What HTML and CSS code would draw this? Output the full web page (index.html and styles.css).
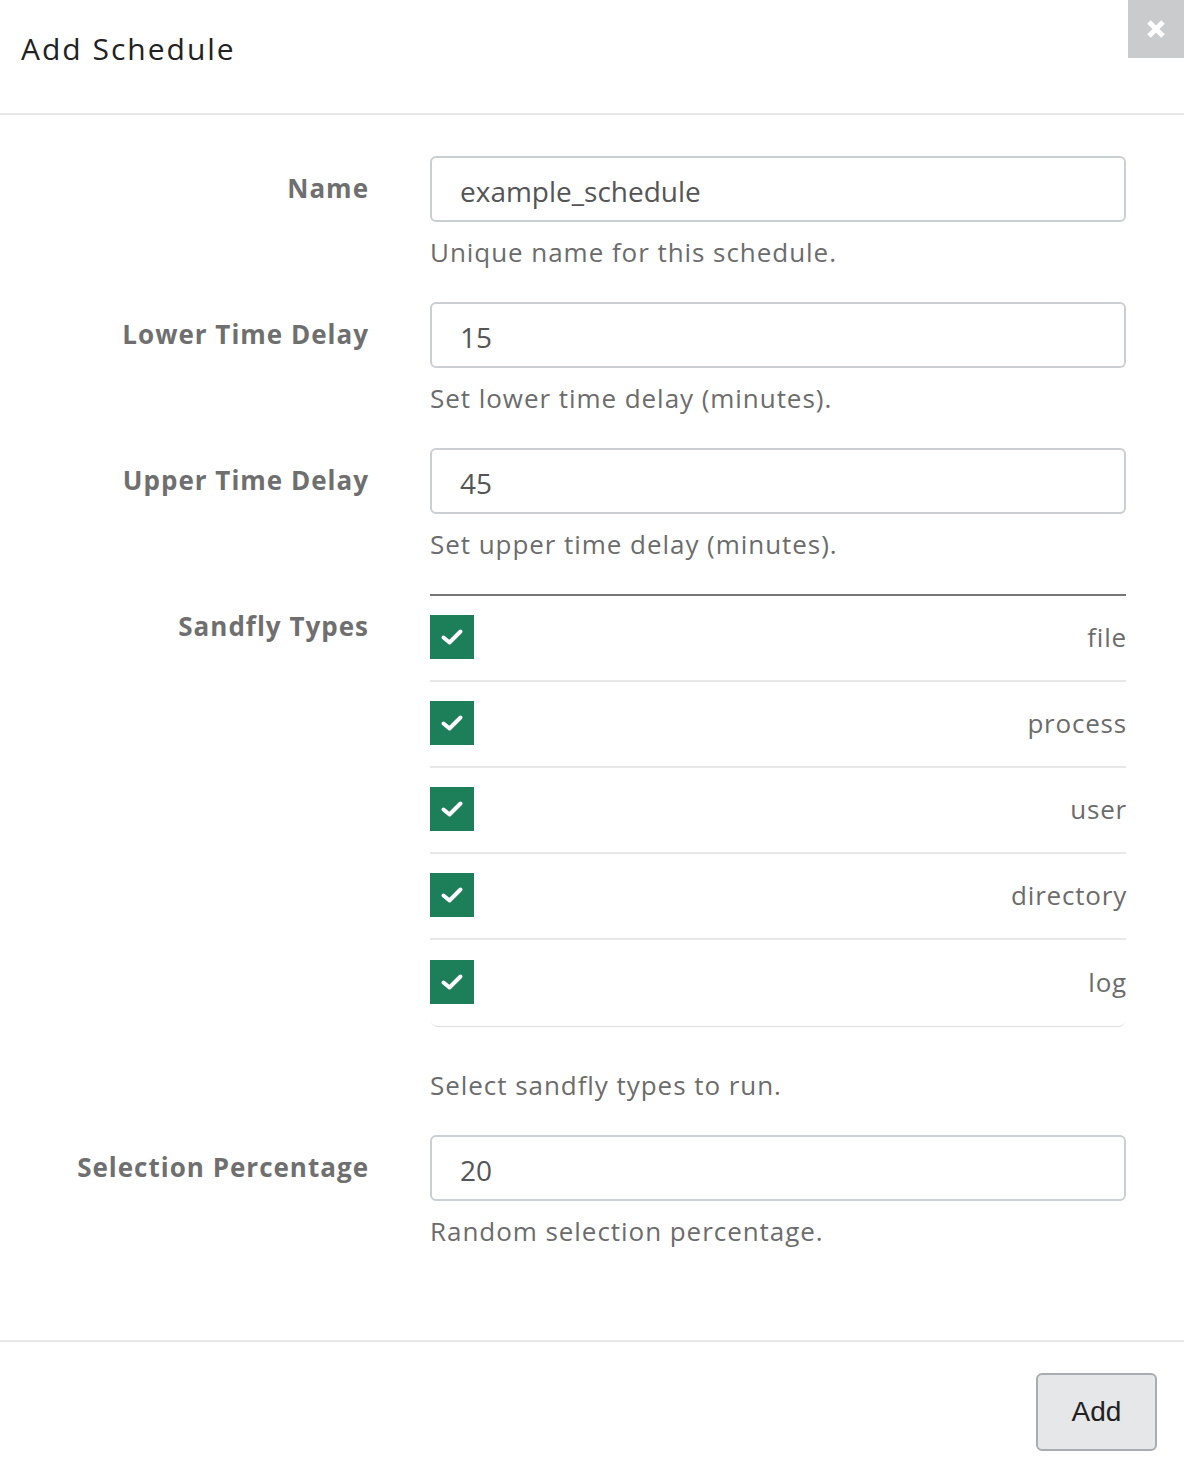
FILE: index.html
```html
<!DOCTYPE html>
<html lang="en">
<head>
<meta charset="utf-8">
<title>Add Schedule</title>
<link rel="stylesheet" href="styles.css">
</head>
<body>
<div class="modal">
  <div class="modal-header">
    <h4 class="modal-title">Add Schedule</h4>
    <button class="close" type="button" aria-label="Close">
      <svg width="20" height="20" viewBox="0 0 20 20"><path d="M3 3 L17 17 M17 3 L3 17" stroke="#fff" stroke-width="5" stroke-linecap="butt"/></svg>
    </button>
  </div>
  <div class="modal-body">
    <div class="form-group">
      <label class="control-label">Name</label>
      <div class="field">
        <div class="form-control">example_schedule</div>
        <p class="help">Unique name for this schedule.</p>
      </div>
    </div>
    <div class="form-group">
      <label class="control-label">Lower Time Delay</label>
      <div class="field">
        <div class="form-control">15</div>
        <p class="help">Set lower time delay (minutes).</p>
      </div>
    </div>
    <div class="form-group">
      <label class="control-label">Upper Time Delay</label>
      <div class="field">
        <div class="form-control">45</div>
        <p class="help">Set upper time delay (minutes).</p>
      </div>
    </div>
    <div class="form-group">
      <label class="control-label">Sandfly Types</label>
      <div class="field">
        <ul class="check-list">
          <li class="check-row"><span class="checkbox"><svg width="24" height="24" viewBox="0 0 24 24"><path d="M3.5 12.5 L9.5 17.5 L20.5 6.5" fill="none" stroke="#fff" stroke-width="4" stroke-linecap="round" stroke-linejoin="round"/></svg></span><span class="check-label">file</span></li>
          <li class="check-row"><span class="checkbox"><svg width="24" height="24" viewBox="0 0 24 24"><path d="M3.5 12.5 L9.5 17.5 L20.5 6.5" fill="none" stroke="#fff" stroke-width="4" stroke-linecap="round" stroke-linejoin="round"/></svg></span><span class="check-label">process</span></li>
          <li class="check-row"><span class="checkbox"><svg width="24" height="24" viewBox="0 0 24 24"><path d="M3.5 12.5 L9.5 17.5 L20.5 6.5" fill="none" stroke="#fff" stroke-width="4" stroke-linecap="round" stroke-linejoin="round"/></svg></span><span class="check-label">user</span></li>
          <li class="check-row"><span class="checkbox"><svg width="24" height="24" viewBox="0 0 24 24"><path d="M3.5 12.5 L9.5 17.5 L20.5 6.5" fill="none" stroke="#fff" stroke-width="4" stroke-linecap="round" stroke-linejoin="round"/></svg></span><span class="check-label">directory</span></li>
          <li class="check-row"><span class="checkbox"><svg width="24" height="24" viewBox="0 0 24 24"><path d="M3.5 12.5 L9.5 17.5 L20.5 6.5" fill="none" stroke="#fff" stroke-width="4" stroke-linecap="round" stroke-linejoin="round"/></svg></span><span class="check-label">log</span></li>
        </ul>
        <p class="help help-list">Select sandfly types to run.</p>
      </div>
    </div>
    <div class="form-group">
      <label class="control-label">Selection Percentage</label>
      <div class="field">
        <div class="form-control">20</div>
        <p class="help">Random selection percentage.</p>
      </div>
    </div>
  </div>
  <div class="modal-footer">
    <button class="btn" type="button">Add</button>
  </div>
</div>
</body>
</html>
```

FILE: styles.css
```css
html, body {
  margin: 0;
  padding: 0;
  background: #fff;
}

body {
  font-family: "Open Sans", "Noto Sans", sans-serif;
  color: #333;
}

.modal {
  width: 1184px;
}

.modal-header {
  position: relative;
  height: 115px;
  border-bottom: 2px solid #e8e8e8;
  box-sizing: border-box;
  display: flex;
  align-items: center;
  padding-left: 21px;
}

.modal-title {
  margin: 0 0 16px 0;
  font-size: 30px;
  font-weight: 400;
  letter-spacing: 2px;
  color: #222;
  line-height: 40px;
}

.close {
  position: absolute;
  top: 0;
  right: 0;
  width: 56px;
  height: 58px;
  border: 0;
  padding: 0;
  margin: 0;
  background: #c9cbcd;
  display: flex;
  align-items: center;
  justify-content: center;
  cursor: pointer;
}

.modal-body {
  padding: 41px 58px 91px 0;
}

.form-group {
  display: grid;
  grid-template-columns: 369px 1fr;
  column-gap: 61px;
  margin-bottom: 32px;
}

.form-group:last-child {
  margin-bottom: 0;
}

.control-label {
  text-align: right;
  font-size: 26px;
  font-weight: 700;
  letter-spacing: 1px;
  color: #6f6f6f;
  line-height: 36px;
  padding-top: 14px;
}

.form-control {
  height: 66px;
  box-sizing: border-box;
  border: 2px solid #cbced2;
  border-radius: 6px;
  padding: 2px 28px 0;
  font-size: 28px;
  line-height: 62px;
  color: #555;
}

.help {
  margin: 12px 0 0 0;
  font-size: 26px;
  line-height: 36px;
  letter-spacing: 0.95px;
  color: #6c6c6c;
}

.help-list {
  margin-top: 41px;
}

.check-list {
  list-style: none;
  margin: 0;
  padding: 0;
  border-top: 2px solid #777;
  border-radius: 0 0 8px 8px;
  box-shadow: 0 2px 1px -1px rgba(0, 0, 0, 0.14);
}

.check-row {
  height: 86px;
  box-sizing: border-box;
  display: flex;
  align-items: center;
  justify-content: space-between;
  border-bottom: 2px solid #e8e8e8;
  padding-bottom: 2px;
}

.check-row:last-child {
  border-bottom: 0;
}

.checkbox {
  width: 44px;
  height: 44px;
  background: #1c7f5a;
  display: flex;
  align-items: center;
  justify-content: center;
}

.check-label {
  font-size: 26px;
  letter-spacing: 0.8px;
  margin-right: -1px;
  color: #6c6c6c;
  line-height: 36px;
}

.modal-footer {
  border-top: 2px solid #e8e8e8;
  display: flex;
  justify-content: flex-end;
  padding: 31px 27px 24px 0;
}

.btn {
  width: 121px;
  height: 78px;
  box-sizing: border-box;
  border: 2px solid #a9acb0;
  border-radius: 6px;
  background: #e6e7e9;
  font-family: "Liberation Sans", Arial, sans-serif;
  font-size: 28px;
  color: #222;
  padding: 0;
}
```
